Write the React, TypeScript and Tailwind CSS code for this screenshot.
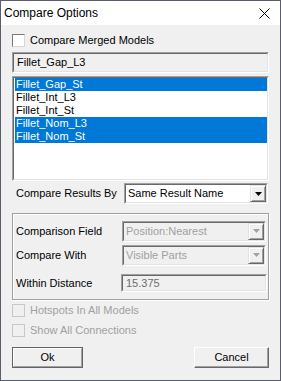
import React from 'react';

const font = { fontFamily: '"Liberation Sans", Arial, sans-serif' };

function Sunken({ className, children }: any) {
  return (
    <div className={`border border-t-[#a0a0a0] border-l-[#a0a0a0] border-b-white border-r-white ${className || ''}`}>
      <div className="h-full w-full border border-t-[#696969] border-l-[#696969] border-b-[#e3e3e3] border-r-[#e3e3e3]">
        {children}
      </div>
    </div>
  );
}

function Arrow({ disabled }: { disabled?: boolean }) {
  return (
    <div className="flex h-full w-[16px] items-center justify-center border border-t-[#e3e3e3] border-l-[#e3e3e3] border-b-[#696969] border-r-[#696969] bg-[#f0f0f0] shadow-[inset_1px_1px_0_white,inset_-1px_-1px_0_#a0a0a0]">
      <svg width="7" height="4" viewBox="0 0 7 4">
        <path d="M0 0h7L3.5 4z" fill={disabled ? '#a0a0a0' : '#000'} />
      </svg>
    </div>
  );
}

function Combo({ value, disabled }: { value: string; disabled?: boolean }) {
  return (
    <Sunken className={`h-[21px] w-[144px] ${disabled ? 'bg-[#f0f0f0]' : 'bg-white'}`}>
      <div className="flex h-full items-center justify-between">
        <span className={`pl-[2px] ${disabled ? 'text-[#a0a0a0]' : 'text-black'}`}>{value}</span>
        <Arrow disabled={disabled} />
      </div>
    </Sunken>
  );
}

function CheckRow({ label, disabled }: { label: string; disabled?: boolean }) {
  return (
    <div className="flex h-[13px] items-center gap-[5px]">
      {disabled ? (
        <div className="h-[13px] w-[13px] border border-[#c8c8c8] bg-[#f0f0f0]" />
      ) : (
        <div className="h-[13px] w-[13px] border border-t-[#7a7a7a] border-l-[#7a7a7a] border-b-[#d8d8d8] border-r-[#d8d8d8] bg-white" />
      )}
      <span className={disabled ? 'text-[#a0a0a0]' : 'text-black'}>{label}</span>
    </div>
  );
}

export default function App() {
  const items = [
    { name: 'Fillet_Gap_St', sel: true },
    { name: 'Fillet_Int_L3', sel: false },
    { name: 'Fillet_Int_St', sel: false },
    { name: 'Fillet_Nom_L3', sel: true },
    { name: 'Fillet_Nom_St', sel: true },
  ];

  return (
    <div style={font} className="flex h-[381px] w-[281px] flex-col border border-[#5b5b6e] bg-[#f0f0f0] text-[11px] leading-[13px] text-black">
      <div className="flex h-[24px] shrink-0 items-center justify-between bg-white pl-[3px] pr-[10px] text-[12px]">
        <span>Compare Options</span>
        <svg width="11" height="11" viewBox="0 0 11 11">
          <path d="M0.5 0.5l10 10M10.5 0.5l-10 10" stroke="#000" strokeWidth="1" />
        </svg>
      </div>

      <div className="flex flex-col px-[11px] pt-[9px]">
        <CheckRow label="Compare Merged Models" />

        <Sunken className="mt-[5px] h-[21px] w-[257px]">
          <div className="flex h-full items-center pl-[3px]">Fillet_Gap_L3</div>
        </Sunken>

        <Sunken className="mt-[3px] h-[105px] w-[257px] bg-white">
          <div className="flex flex-col pl-[1px]">
            {items.map((it) => (
              <div
                key={it.name}
                className={`h-[13px] pl-[1px] ${it.sel ? 'bg-[#0078d7] text-white' : 'text-black'}`}
              >
                {it.name}
              </div>
            ))}
          </div>
        </Sunken>

        <div className="mt-[2px] flex h-[21px] items-center justify-between">
          <span className="pl-[4px]">Compare Results By</span>
          <div className="mr-[1px]">
            <Combo value="Same Result Name" />
          </div>
        </div>

        <div className="mt-[9px] h-[87px] w-[257px] border border-[#a0a0a0] shadow-[inset_1px_1px_0_white,1px_1px_0_white] pl-[3px] pr-[2px] pt-[7px]">
          <div className="flex h-[20px] items-center justify-between">
            <span>Comparison Field</span>
            <Combo value="Position:Nearest" disabled />
          </div>
          <div className="mt-[4px] flex h-[20px] items-center justify-between">
            <span>Compare With</span>
            <Combo value="Visible Parts" disabled />
          </div>
          <div className="mt-[9px] flex h-[18px] items-center justify-between">
            <span>Within Distance</span>
            <Sunken className="-mr-[1px] h-[18px] w-[146px]">
              <div className="flex h-full items-center pl-[3px] text-[#6d6d6d]">15.375</div>
            </Sunken>
          </div>
        </div>

        <div className="mt-[4px] flex flex-col gap-[7px]">
          <CheckRow label="Hotspots In All Models" disabled />
          <CheckRow label="Show All Connections" disabled />
        </div>

        <div className="mt-[10px] flex items-center justify-between">
          <button className="h-[21px] w-[71px] border border-[#646464] bg-[#f0f0f0]">
            <div className="flex h-full w-full items-center justify-center border border-t-white border-l-white border-b-[#a0a0a0] border-r-[#a0a0a0]">
              Ok
            </div>
          </button>
          <button className="h-[21px] w-[75px] border border-t-white border-l-white border-b-[#696969] border-r-[#696969] bg-[#f0f0f0] shadow-[inset_-1px_-1px_0_#a0a0a0]">
            Cancel
          </button>
        </div>
      </div>
    </div>
  );
}
